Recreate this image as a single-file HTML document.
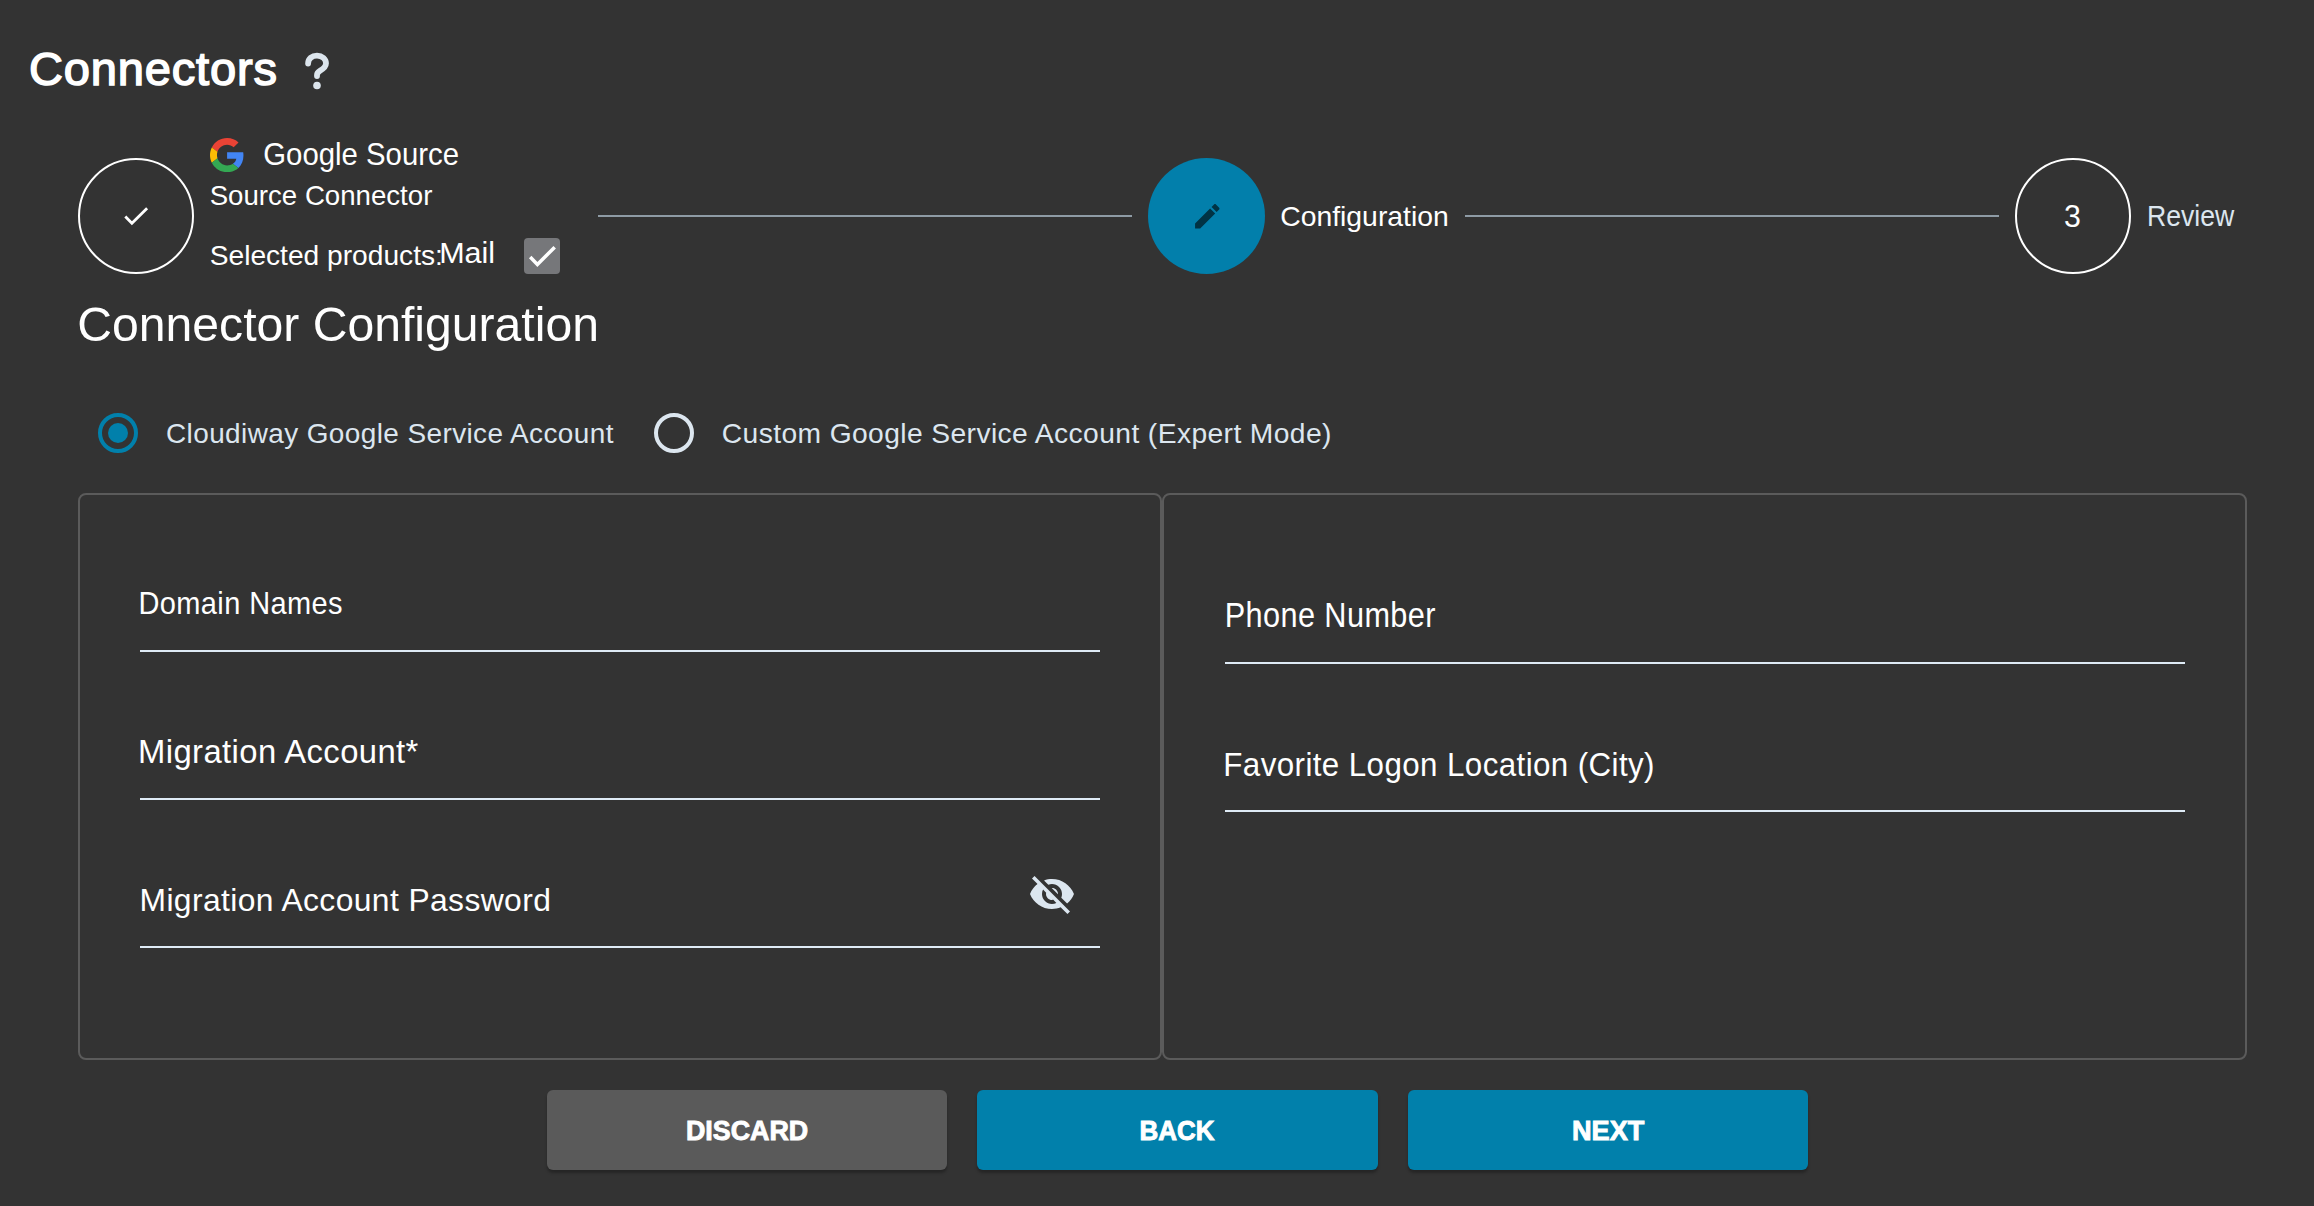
<!DOCTYPE html>
<html><head><meta charset="utf-8"><title>Connectors</title>
<style>
html,body{margin:0;padding:0;}
body{width:2314px;height:1206px;overflow:hidden;background:#333333;position:relative;font-family:"Liberation Sans",sans-serif;}
.t{position:absolute;white-space:nowrap;}
.a{position:absolute;box-sizing:border-box;}
.ring{border:2px solid #ffffff;border-radius:50%;}
.line{height:2px;background:#8e9ba5;}
.ul{height:2px;background:#dfebf6;}
.panel{border:2px solid #5b5b5b;border-radius:8px;}
.btn{border-radius:6px;box-shadow:0 3px 3px rgba(0,0,0,0.28);}
</style></head><body>
<!-- title help icon -->
<svg class="a" style="left:0;top:0" width="400" height="120" viewBox="0 0 400 120">
 <path d="M308.1,63.6 C308.1,58.7 312,55.6 317,55.6 C322.2,55.6 326,59 326,63.3 C326,67.2 322.5,69.3 320,70.8 C317.8,72.1 317,73.3 317,75.2 L317,76" fill="none" stroke="#dce5ed" stroke-width="5.8" stroke-linecap="round"/>
 <circle cx="317" cy="85.5" r="3.8" fill="#dce5ed"/>
</svg>
<!-- step 1 -->
<div class="a ring" style="left:78px;top:158px;width:116px;height:116px"></div>
<svg class="a" style="left:0;top:0" width="200" height="300"><polyline points="125.3,216.6 131.9,223.3 147.1,208.2" fill="none" stroke="#fff" stroke-width="2.8"/></svg>
<svg class="a" style="left:210.2px;top:137.8px" width="34.2" height="34.2" viewBox="0 0 48 48">
<path fill="#EA4335" d="M24 9.5c3.54 0 6.71 1.22 9.21 3.6l6.85-6.85C35.9 2.38 30.47 0 24 0 14.62 0 6.51 5.38 2.56 13.22l7.98 6.19C12.43 13.72 17.74 9.5 24 9.5z"/>
<path fill="#4285F4" d="M46.98 24.55c0-1.57-.15-3.09-.38-4.55H24v9.02h12.94c-.58 2.96-2.26 5.480-4.78 7.18l7.73 6c4.51-4.18 7.09-10.36 7.09-17.65z"/>
<path fill="#FBBC05" d="M10.53 28.59c-.48-1.45-.76-2.99-.76-4.59s.27-3.14.76-4.59l-7.98-6.19C.92 16.46 0 20.12 0 24c0 3.880.92 7.54 2.56 10.78l7.97-6.19z"/>
<path fill="#34A853" d="M24 48c6.48 0 11.93-2.13 15.89-5.81l-7.73-6c-2.15 1.45-4.92 2.3-8.16 2.3-6.26 0-11.57-4.22-13.47-9.91l-7.98 6.19C6.51 42.62 14.62 48 24 48z"/>
</svg>
<div class="a" style="left:524px;top:238px;width:36px;height:36px;background:#76777a;border-radius:4px"></div>
<svg class="a" style="left:500px;top:230px" width="80" height="50"><polyline points="30.2,27 37.4,34.4 54.7,17.2" fill="none" stroke="#fff" stroke-width="3.5"/></svg>
<!-- connectors lines -->
<div class="a line" style="left:598px;top:215px;width:534px"></div>
<div class="a line" style="left:1465px;top:215px;width:534px"></div>
<!-- step 2 -->
<div class="a" style="left:1148px;top:158px;width:117px;height:116px;border-radius:50%;background:#027fab"></div>
<svg class="a" style="left:1190.5px;top:200px" width="32.6" height="32.6" viewBox="0 0 24 24"><path fill="#013344" d="M3 17.25V21h3.75L17.81 9.94l-3.75-3.75L3 17.25zM20.71 7.04c.39-.39.39-1.02 0-1.41l-2.34-2.34c-.39-.39-1.02-.39-1.41 0l-1.830 1.83 3.75 3.75 1.83-1.83z"/></svg>
<!-- step 3 -->
<div class="a ring" style="left:2015px;top:158px;width:116px;height:116px"></div>
<!-- radios -->
<div class="a" style="left:98px;top:413px;width:40px;height:40px;border:4px solid #0180ab;border-radius:50%"></div>
<div class="a" style="left:108px;top:423px;width:20px;height:20px;background:#0180ab;border-radius:50%"></div>
<div class="a" style="left:654px;top:413px;width:40px;height:40px;border:4px solid #dce6ef;border-radius:50%"></div>
<!-- panels -->
<div class="a panel" style="left:78px;top:493px;width:1084px;height:567px"></div>
<div class="a panel" style="left:1162px;top:493px;width:1085px;height:567px"></div>
<div class="a ul" style="left:140px;top:650px;width:960px"></div>
<div class="a ul" style="left:140px;top:798px;width:960px"></div>
<div class="a ul" style="left:140px;top:946px;width:960px"></div>
<div class="a ul" style="left:1225px;top:662px;width:960px"></div>
<div class="a ul" style="left:1225px;top:810px;width:960px"></div>
<svg class="a" style="left:1027.5px;top:869.8px" width="48" height="48" viewBox="0 0 24 24"><path fill="#dce6ef" d="M12 7c2.76 0 5 2.24 5 5 0 .65-.13 1.26-.36 1.83l2.92 2.92c1.51-1.26 2.7-2.89 3.43-4.75-1.73-4.39-6-7.5-11-7.5-1.4 0-2.74.25-3.98.7l2.16 2.16C10.740 7.13 11.35 7 12 7zM2 4.27l2.28 2.28.46.46C3.08 8.3 1.78 10.02 1 12c1.73 4.39 6 7.5 11 7.5 1.55 0 3.03-.3 4.38-.84l.42.42L19.73 22 21 20.73 3.27 3 2 4.27zM7.53 9.8l1.55 1.55c-.05.21-.08.43-.08.65 0 1.66 1.34 3 3 3 .22 0 .44-.03.65-.08l1.55 1.55c-.67.33-1.41.53-2.2.53-2.76 0-5-2.24-5-5 0-.79.2-1.53.53-2.2zm4.31-.78l3.15 3.15.02-.16c0-1.66-1.34-3-3-3l-.17.01z"/></svg>
<!-- buttons -->
<div class="a btn" style="left:547px;top:1090px;width:400px;height:80px;background:#5a5a5a"></div>
<div class="a btn" style="left:977px;top:1090px;width:401px;height:80px;background:#0180ab"></div>
<div class="a btn" style="left:1408px;top:1090px;width:400px;height:80px;background:#0180ab"></div>
<div class="t" id="t_title" style="left:29.00px;top:44.52px;font-size:47.09px;line-height:47.09px;letter-spacing:0.800px;color:#ffffff;-webkit-text-stroke:1.5px #ffffff;transform:scaleY(0.9650);transform-origin:0 39.87px">Connectors</div>
<div class="t" id="t_gsrc" style="left:263.31px;top:140.00px;font-size:29.34px;line-height:29.34px;letter-spacing:0.000px;color:#ffffff;transform:scaleY(1.0755);transform-origin:0 24.84px">Google Source</div>
<div class="t" id="t_srcconn" style="left:209.70px;top:181.71px;font-size:27.63px;line-height:27.63px;letter-spacing:0.000px;color:#ffffff">Source Connector</div>
<div class="t" id="t_selprod" style="left:209.70px;top:242.01px;font-size:28.16px;line-height:28.16px;letter-spacing:0.000px;color:#ffffff;transform:scaleY(0.9564);transform-origin:0 23.84px">Selected products:</div>
<div class="t" id="t_mail" style="left:439.20px;top:237.19px;font-size:30.53px;line-height:30.53px;letter-spacing:0.000px;color:#ffffff;transform:scaleY(0.9666);transform-origin:0 25.84px">Mail</div>
<div class="t" id="t_config" style="left:1280.20px;top:202.00px;font-size:28.35px;line-height:28.35px;letter-spacing:0.000px;color:#ffffff;transform:scaleY(0.9894);transform-origin:0 24.00px">Configuration</div>
<div class="t" id="t_3" style="left:2064.00px;top:201.71px;font-size:30.30px;line-height:30.30px;letter-spacing:0.000px;color:#ffffff;transform:scaleY(1.0184);transform-origin:0 25.65px">3</div>
<div class="t" id="t_review" style="left:2147.00px;top:203.96px;font-size:26.63px;line-height:26.63px;letter-spacing:0.000px;color:#dce6ef;transform:scaleY(1.0862);transform-origin:0 22.54px">Review</div>
<div class="t" id="t_h2" style="left:77.31px;top:300.00px;font-size:48.13px;line-height:48.13px;letter-spacing:0.000px;color:#ffffff">Connector Configuration</div>
<div class="t" id="t_r1" style="left:166.00px;top:420.02px;font-size:27.96px;line-height:27.96px;letter-spacing:0.400px;color:#dce6ef;transform:scaleY(1.0134);transform-origin:0 23.67px">Cloudiway Google Service Account</div>
<div class="t" id="t_r2" style="left:721.81px;top:418.99px;font-size:28.22px;line-height:28.22px;letter-spacing:0.400px;color:#dce6ef;transform:scaleY(1.0039);transform-origin:0 23.89px">Custom Google Service Account (Expert Mode)</div>
<div class="t" id="t_dom" style="left:138.41px;top:590.35px;font-size:28.99px;line-height:28.99px;letter-spacing:0.400px;color:#ffffff;transform:scaleY(1.0730);transform-origin:0 24.54px">Domain Names</div>
<div class="t" id="t_macc" style="left:138.00px;top:736.31px;font-size:32.82px;line-height:32.82px;letter-spacing:0.400px;color:#ffffff;transform:scaleY(0.9964);transform-origin:0 27.78px">Migration Account*</div>
<div class="t" id="t_mpw" style="left:139.50px;top:885.02px;font-size:31.82px;line-height:31.82px;letter-spacing:0.400px;color:#ffffff;transform:scaleY(1.0050);transform-origin:0 26.93px">Migration Account Password</div>
<div class="t" id="t_phone" style="left:1224.70px;top:601.93px;font-size:30.69px;line-height:30.69px;letter-spacing:0.400px;color:#ffffff;transform:scaleY(1.1176);transform-origin:0 25.98px">Phone Number</div>
<div class="t" id="t_fav" style="left:1223.31px;top:749.53px;font-size:31.34px;line-height:31.34px;letter-spacing:0.400px;color:#ffffff;transform:scaleY(1.0436);transform-origin:0 26.53px">Favorite Logon Location (City)</div>
<div class="t" id="t_discard" style="left:686.00px;top:1117.99px;font-size:26.83px;line-height:26.83px;letter-spacing:0.000px;color:#ffffff;font-weight:bold;-webkit-text-stroke:0.9px #ffffff;transform:scaleY(1.0089);transform-origin:0 22.71px">DISCARD</div>
<div class="t" id="t_back" style="left:1139.41px;top:1119.16px;font-size:25.96px;line-height:25.96px;letter-spacing:0.000px;color:#ffffff;font-weight:bold;-webkit-text-stroke:0.9px #ffffff;transform:scaleY(1.0426);transform-origin:0 21.98px">BACK</div>
<div class="t" id="t_next" style="left:1572.00px;top:1116.95px;font-size:27.15px;line-height:27.15px;letter-spacing:0.000px;color:#ffffff;font-weight:bold;-webkit-text-stroke:0.9px #ffffff;transform:scaleY(0.9969);transform-origin:0 22.98px">NEXT</div>
</body></html>
